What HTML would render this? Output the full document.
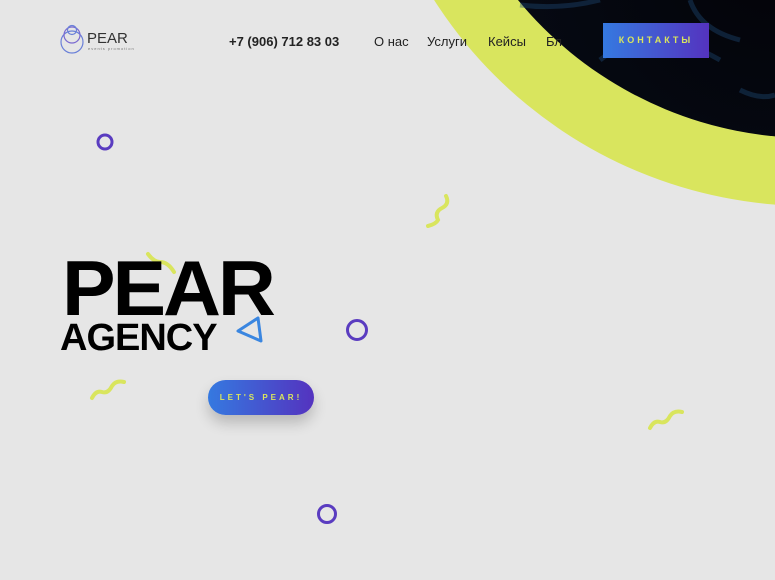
<!DOCTYPE html>
<html><head><meta charset="utf-8"><style>
*{margin:0;padding:0;box-sizing:border-box}
body{width:775px;height:580px;overflow:hidden;background:#e6e6e6;font-family:"Liberation Sans",sans-serif;position:relative}
.abs{position:absolute}
.nav{font-size:13px;color:#222;top:34px}
</style></head><body>
<svg class="abs" style="left:0;top:0" width="775" height="580">
<defs>
<radialGradient id="ph" cx="0.45" cy="0.75" r="0.55">
<stop offset="0" stop-color="#030308"/><stop offset="0.7" stop-color="#060a14"/><stop offset="1" stop-color="#14294a"/>
</radialGradient>
</defs>
<circle cx="810" cy="-240" r="446" fill="#d9e55e"/>
<circle cx="810" cy="-240" r="378" fill="url(#ph)"/>
<path d="M520 5 Q560 10 600 0 M600 60 Q650 20 720 60 M690 0 Q700 30 740 40 M740 90 Q760 100 775 95" stroke="#1f4a78" stroke-width="5" fill="none" opacity=".4"/>
<circle cx="105" cy="142" r="7" fill="none" stroke="#5a3cc0" stroke-width="3"/>
<circle cx="357" cy="330" r="9.5" fill="none" stroke="#5a3cc0" stroke-width="3"/>
<circle cx="327" cy="514" r="8.5" fill="none" stroke="#5a3cc0" stroke-width="3"/>
<path d="M446 196 q4 8 -4 12 q-8 4 -4 12 q-2 4 -10 6" stroke="#d9e55e" stroke-width="4" fill="none" stroke-linecap="round"/>
<path d="M92 398 q4 -8 10 -6 q6 2 10 -6 q4 -6 12 -4" stroke="#d9e55e" stroke-width="4" fill="none" stroke-linecap="round"/>
<path d="M650 428 q4 -8 10 -6 q6 2 10 -6 q4 -6 12 -4" stroke="#d9e55e" stroke-width="4" fill="none" stroke-linecap="round"/>
<path d="M148 254 q6 8 12 8 q8 0 14 10" stroke="#d9e55e" stroke-width="4" fill="none" stroke-linecap="round"/>
<path d="M238 331 L258 318 L261 341 Z" stroke="#3a86e0" stroke-width="3" fill="none" stroke-linejoin="round"/>
<circle cx="72" cy="42" r="11" fill="none" stroke="#6a80d8" stroke-width="1.2"/>
<circle cx="72" cy="35" r="8" fill="none" stroke="#7a6ad0" stroke-width="1.2"/>
<circle cx="72" cy="30" r="4.5" fill="none" stroke="#6a80d8" stroke-width="1.2"/>
</svg>
<div class="abs" style="left:87px;top:30px;font-size:15px;color:#333">PEAR</div>
<div class="abs" style="left:88px;top:46px;font-size:4px;color:#777;letter-spacing:1px">events promotion</div>
<div class="abs" style="left:229px;top:34px;font-size:13px;font-weight:bold;color:#222">+7 (906) 712 83 03</div>
<div class="abs nav" style="left:374px">О нас</div>
<div class="abs nav" style="left:427px">Услуги</div>
<div class="abs nav" style="left:488px">Кейсы</div>
<div class="abs nav" style="left:546px">Бл</div>
<div class="abs" style="left:603px;top:23px;width:106px;height:35px;background:linear-gradient(90deg,#3579e0,#5433bf);color:#d9e55e;font-size:9px;font-weight:bold;letter-spacing:3px;text-align:center;line-height:35px">КОНТАКТЫ</div>
<div class="abs" style="left:62px;top:248px;font-size:78px;font-weight:900;letter-spacing:-3px;color:#000;line-height:80px;transform:scaleX(1.03);transform-origin:left">PEAR</div>
<div class="abs" style="left:60px;top:318px;font-size:38px;font-weight:900;letter-spacing:-1px;color:#000;line-height:40px;transform:scaleX(1.0);transform-origin:left">AGENCY</div>
<div class="abs" style="left:208px;top:380px;width:106px;height:35px;border-radius:18px;background:linear-gradient(90deg,#3579e0,#5433bf);color:#d9e55e;font-size:8px;font-weight:bold;letter-spacing:3px;text-align:center;line-height:35px;box-shadow:0 8px 14px rgba(0,0,0,.2)">LET'S PEAR!</div>
</body></html>
